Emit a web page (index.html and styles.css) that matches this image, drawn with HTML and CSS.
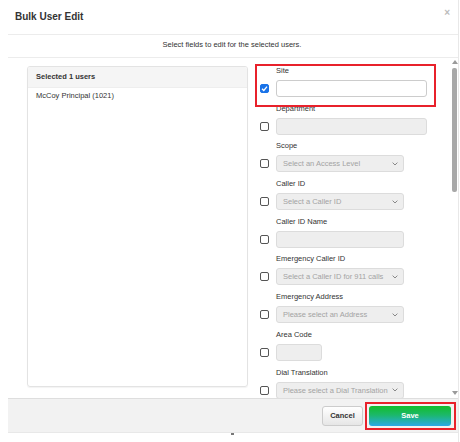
FILE: index.html
```html
<!DOCTYPE html>
<html>
<head>
<meta charset="utf-8">
<link rel="stylesheet" href="styles.css">
</head>
<body>
<div class="modal">
  <div class="header">
    <span class="title">Bulk User Edit</span>
    <span class="close">×</span>
  </div>
  <div class="subheader">Select fields to edit for the selected users.</div>
  <div class="body">
    <div class="users">
      <div class="users-head">Selected 1 users</div>
      <div class="users-item">McCoy Principal (1021)</div>
    </div>
    <div class="fields">
      <div class="highlight site-box"></div>
      <div class="field">
        <div class="label">Site</div>
        <div class="row"><span class="cb checked"><svg viewBox="0 0 9 9" width="9" height="9"><path d="M2 4.8 L3.8 6.5 L7 2.6" fill="none" stroke="#fff" stroke-width="1.3"/></svg></span><div class="input wide white"></div></div>
      </div>
      <div class="field">
        <div class="label">Department</div>
        <div class="row"><span class="cb"></span><div class="input wide"></div></div>
      </div>
      <div class="field">
        <div class="label">Scope</div>
        <div class="row"><span class="cb"></span><div class="input select">Select an Access Level<svg class="chev" viewBox="0 0 6 4" width="6" height="4"><path d="M0.6 0.6 L3 3 L5.4 0.6" fill="none" stroke="#888" stroke-width="1"/></svg></div></div>
      </div>
      <div class="field">
        <div class="label">Caller ID</div>
        <div class="row"><span class="cb"></span><div class="input select">Select a Caller ID<svg class="chev" viewBox="0 0 6 4" width="6" height="4"><path d="M0.6 0.6 L3 3 L5.4 0.6" fill="none" stroke="#888" stroke-width="1"/></svg></div></div>
      </div>
      <div class="field">
        <div class="label">Caller ID Name</div>
        <div class="row"><span class="cb"></span><div class="input mid"></div></div>
      </div>
      <div class="field">
        <div class="label">Emergency Caller ID</div>
        <div class="row"><span class="cb"></span><div class="input select">Select a Caller ID for 911 calls<svg class="chev" viewBox="0 0 6 4" width="6" height="4"><path d="M0.6 0.6 L3 3 L5.4 0.6" fill="none" stroke="#888" stroke-width="1"/></svg></div></div>
      </div>
      <div class="field">
        <div class="label">Emergency Address</div>
        <div class="row"><span class="cb"></span><div class="input select">Please select an Address<svg class="chev" viewBox="0 0 6 4" width="6" height="4"><path d="M0.6 0.6 L3 3 L5.4 0.6" fill="none" stroke="#888" stroke-width="1"/></svg></div></div>
      </div>
      <div class="field">
        <div class="label">Area Code</div>
        <div class="row"><span class="cb"></span><div class="input small"></div></div>
      </div>
      <div class="field">
        <div class="label">Dial Translation</div>
        <div class="row"><span class="cb"></span><div class="input select">Please select a Dial Translation<svg class="chev" viewBox="0 0 6 4" width="6" height="4"><path d="M0.6 0.6 L3 3 L5.4 0.6" fill="none" stroke="#888" stroke-width="1"/></svg></div></div>
      </div>
    </div>
    <div class="scrollbar">
      <svg class="arrow-up" viewBox="0 0 6 4" width="6" height="4"><path d="M0 4 L3 0 L6 4 Z" fill="#9a9a9a"/></svg>
      <div class="thumb"></div>
      <svg class="arrow-down" viewBox="0 0 6 4" width="6" height="4"><path d="M0 0 L6 0 L3 4 Z" fill="#9a9a9a"/></svg>
    </div>
  </div>
  <div class="footer">
    <button class="btn cancel">Cancel</button>
    <button class="btn save">Save</button>
    <div class="highlight save-box"></div>
  </div>
  <div class="mark"></div>
</div>
</body>
</html>
```
FILE: styles.css
```css
* { box-sizing: border-box; }
html, body { margin: 0; padding: 0; background: #fff; }
body {
  font-family: "Liberation Sans", Arial, sans-serif;
  font-size: 7.5px;
  color: #333;
  width: 460px;
  height: 442px;
  overflow: hidden;
}
.modal {
  margin-left: 8px;
  width: 451px;
  height: 442px;
  border-right: 1px solid #e8e8e8;
  position: relative;
}
.header {
  height: 35px;
  border-bottom: 1px solid #ececec;
  display: flex;
  align-items: center;
  justify-content: space-between;
  padding: 0 8px 2px 7px;
}
.title {
  font-weight: bold;
  font-size: 10px;
  color: #333;
}
.close {
  color: #bbb;
  font-size: 10px;
  font-weight: bold;
  margin-top: -7px;
}
.subheader {
  height: 23px;
  border-bottom: 1px solid #ececec;
  text-align: center;
  line-height: 20px;
  color: #333;
  padding-right: 2px;
}
.body {
  height: 340px;
  display: flex;
  padding-left: 19px;
}
.users {
  width: 221px;
  height: 321px;
  margin-top: 8px;
  border: 1px solid #e3e3e3;
  border-radius: 3px;
  box-shadow: 0 1px 1px rgba(0,0,0,0.05);
  overflow: hidden;
}
.users-head {
  background: #f5f5f5;
  height: 21px;
  line-height: 19px;
  padding-left: 8px;
  font-weight: bold;
  border-bottom: 1px solid #eee;
}
.users-item {
  padding-left: 8px;
  line-height: 16px;
  margin-top: 0px;
}
.fields {
  width: 196px;
  margin-left: 7px;
  padding-top: 7px;
  padding-left: 5px;
  overflow: hidden;
  position: relative;
}
.field {
  height: 37.7px;
}
.label {
  height: 12px;
  line-height: 12px;
  margin-left: 16px;
  margin-bottom: 3px;
  color: #333;
}
.row {
  display: flex;
  align-items: center;
  gap: 7px;
}
.cb {
  width: 9px;
  height: 9px;
  border: 1px solid #555;
  border-radius: 2px;
  flex: none;
  display: flex;
  background: #fff;
}
.cb.checked {
  background: #1a73e8;
  border-color: #1a73e8;
}
.cb svg { margin: -1px; }
.input {
  height: 17px;
  border: 1px solid #dcdcdc;
  border-radius: 3px;
  background: #eee;
  flex: none;
}
.input.white { background: #fff; border-color: #ccc; }
.input.wide { width: 151px; }
.input.mid { width: 128px; }
.input.small { width: 46px; }
.input.select {
  width: 128px;
  color: #a3a3a3;
  padding-left: 6px;
  display: flex;
  align-items: center;
  justify-content: space-between;
  padding-right: 5px;
}
.chev { flex: none; }
.highlight {
  position: absolute;
  border: 2px solid #e8212b;
  pointer-events: none;
}
.site-box {
  left: 0;
  top: 6px;
  width: 181px;
  height: 43px;
}
.scrollbar {
  width: 7px;
  position: relative;
}
.arrow-up { position: absolute; left: 1px; top: 2px; }
.arrow-down { position: absolute; left: 1px; top: 333px; }
.thumb {
  position: absolute;
  left: 1px;
  top: 10px;
  width: 5px;
  height: 124px;
  background: #a8a8a8;
  border-radius: 2px;
}
.footer {
  height: 35px;
  background: #f2f2f2;
  border-top: 1px solid #dedede;
  border-bottom: 1px solid #e8e8e8;
  display: flex;
  align-items: center;
  justify-content: flex-end;
  gap: 6px;
  padding-right: 7px;
  position: relative;
}
.btn {
  height: 20px;
  font-family: "Liberation Sans", Arial, sans-serif;
  font-size: 7.5px;
  font-weight: bold;
  border-radius: 3px;
  padding: 0;
}
.cancel {
  width: 41px;
  color: #333;
  border: 1px solid #ccc;
  background: linear-gradient(#ffffff, #e6e6e6);
}
.save {
  width: 82px;
  color: #fff;
  border: none;
  background: linear-gradient(#12bd2a 0%, #1cb86a 45%, #2aa9e8 100%);
}
.save-box {
  right: 2px;
  top: 3px;
  width: 91px;
  height: 28px;
}
.mark {
  position: absolute;
  left: 223px;
  top: 433px;
  width: 3px;
  height: 2px;
  background: #777;
}
```
